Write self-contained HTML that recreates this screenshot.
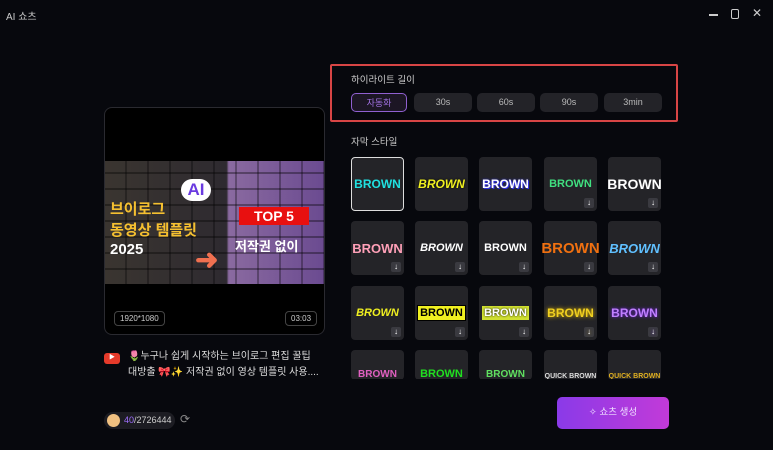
<!DOCTYPE html>
<html><head><meta charset="utf-8"><style>
*{margin:0;padding:0;box-sizing:border-box}
body{width:773px;height:450px;background:#07080d;font-family:"Liberation Sans","Noto Sans CJK KR",sans-serif;color:#ddd;position:relative;overflow:hidden}
.abs{position:absolute}
.btn{position:absolute;top:93px;height:19px;width:58px;background:#232328;border-radius:5px;font-size:9px;color:#bbb;text-align:center;line-height:19px}
.tile{position:absolute;width:53px;height:54px;background:#242428;border-radius:4px;display:flex;align-items:center;justify-content:center;font-weight:bold;font-size:12px;font-family:"Liberation Sans Narrow","Liberation Sans",sans-serif}
.dl{position:absolute;right:3px;bottom:3px;width:10px;height:10px;background:#3a3a40;border-radius:2px;color:#fff;font-size:8px;line-height:10px;text-align:center;font-family:"Liberation Sans",sans-serif}
</style></head><body>
<div class="abs" style="left:6px;top:8px;font-size:10px;color:#ccc">AI 쇼츠</div>
<div class="abs" style="left:709px;top:14px;width:9px;height:1.5px;background:#ccc"></div>
<div class="abs" style="left:731px;top:9px;width:8px;height:10px;border:1.5px solid #ccc;border-radius:2px"></div>
<div class="abs" style="left:752px;top:6px;font-size:12px;color:#ccc">✕</div>

<div class="abs" style="left:104px;top:107px;width:221px;height:228px;border:1px solid #2a2a30;border-radius:8px;background:#000;overflow:hidden">
 <div class="abs" style="left:0;top:53px;width:221px;height:123px;background:linear-gradient(90deg,#3a3530 0%,#2e2a30 55%,#8a6aa0 56%,#6a4a90 100%)">
  <div class="abs" style="left:0;top:0;width:221px;height:123px;background:repeating-linear-gradient(0deg,transparent 0 14px,rgba(0,0,0,.35) 14px 16px),repeating-linear-gradient(90deg,transparent 0 20px,rgba(0,0,0,.3) 20px 22px)"></div>
  <div class="abs" style="left:76px;top:18px;width:30px;height:22px;background:#fff;border-radius:11px;color:#6a3ae0;font-weight:bold;font-size:17px;text-align:center;line-height:22px">AI</div>
  <div class="abs" style="left:5px;top:38px;color:#f5c030;font-weight:bold;font-size:15px;line-height:21px">브이로그<br>동영상 템플릿</div>
  <div class="abs" style="left:5px;top:80px;color:#fff;font-weight:bold;font-size:15px">2025</div>
  <div class="abs" style="left:134px;top:46px;width:70px;height:18px;background:#e81010;color:#fff;font-weight:bold;font-size:14px;text-align:center;line-height:18px">TOP 5</div>
  <div class="abs" style="left:130px;top:75px;color:#fff;font-weight:bold;font-size:13px">저작권 없이</div>
  <div class="abs" style="left:90px;top:82px;color:#f07050;font-size:28px;font-weight:bold">➜</div>
 </div>
 <div class="abs" style="left:9px;top:203px;border:1px solid #444;border-radius:4px;font-size:8px;color:#ccc;padding:2px 5px">1920*1080</div>
 <div class="abs" style="left:180px;top:203px;border:1px solid #444;border-radius:4px;font-size:8px;color:#ccc;padding:2px 5px">03:03</div>
</div>

<div class="abs" style="left:104px;top:353px;width:16px;height:11px;background:#e53a2a;border-radius:3px;color:#fff;font-size:6px;text-align:center;line-height:11px">▶</div>
<div class="abs" style="left:128px;top:349px;font-size:10px;line-height:16px;color:#ddd">🌷누구나 쉽게 시작하는 브이로그 편집 꿀팁<br>대방출 🎀✨ 저작권 없이 영상 템플릿 사용....</div>

<div class="abs" style="left:104px;top:412px;width:71px;height:17px;background:#1c1c22;border-radius:9px"></div>
<div class="abs" style="left:107px;top:414px;width:13px;height:13px;border-radius:50%;background:#f0c080"></div>
<div class="abs" style="left:124px;top:415px;font-size:9px;color:#ccc"><span style="color:#a070ff">40</span>/2726444</div>
<div class="abs" style="left:180px;top:412px;font-size:12px;color:#888">⟳</div>

<div class="abs" style="left:330px;top:64px;width:348px;height:58px;border:2px solid #d84545;border-radius:2px"></div>
<div class="abs" style="left:351px;top:72px;font-size:9.5px;color:#ccc">하이라이트 길이</div>
<div class="btn" style="left:351px;width:56px;border:1px solid #9060d0;background:#1c1624;color:#a070e0">자동화</div>
<div class="btn" style="left:414px">30s</div>
<div class="btn" style="left:477px">60s</div>
<div class="btn" style="left:540px">90s</div>
<div class="btn" style="left:604px">3min</div>
<div class="abs" style="left:351px;top:134px;font-size:9.5px;color:#ccc">자막 스타일</div>

<div class="tile" style="left:351px;top:157px;border:1.5px solid #ddd;color:#20e0e0">BROWN</div>
<div class="tile" style="left:415px;top:157px;color:#f0f020;font-style:italic;text-shadow:0 0 2px #000">BROWN</div>
<div class="tile" style="left:479px;top:157px;color:#fff;text-shadow:0 0 2px #3030e0,1px 1px 0 #3030e0">BROWN</div>
<div class="tile" style="left:544px;top:157px;color:#40e080;font-size:11px">BROWN<span class="dl">↓</span></div>
<div class="tile" style="left:608px;top:157px;color:#fff;font-size:14px">BROWN<span class="dl">↓</span></div>

<div class="tile" style="left:351px;top:221px;color:#ffa0b8;font-size:13px">BROWN<span class="dl">↓</span></div>
<div class="tile" style="left:415px;top:221px;color:#fff;font-style:italic;font-size:11px">BROWN<span class="dl">↓</span></div>
<div class="tile" style="left:479px;top:221px;color:#fff;font-size:11px">BROWN<span class="dl">↓</span></div>
<div class="tile" style="left:544px;top:221px;color:#f07010;font-size:15px">BROWN<span class="dl">↓</span></div>
<div class="tile" style="left:608px;top:221px;color:#60c0ff;font-style:italic;font-size:13px">BROWN<span class="dl">↓</span></div>

<div class="tile" style="left:351px;top:286px;color:#f0f020;font-style:italic;font-size:11px">BROWN<span class="dl">↓</span></div>
<div class="tile" style="left:415px;top:286px"><span style="background:#f0f020;color:#000;font-size:11px;padding:1px 2px;border:1px solid #000">BROWN</span><span class="dl">↓</span></div>
<div class="tile" style="left:479px;top:286px"><span style="background:#d0e030;color:#fff;font-size:11px;padding:1px 2px;text-shadow:0 0 2px #000">BROWN</span><span class="dl">↓</span></div>
<div class="tile" style="left:544px;top:286px;color:#f0d020;text-shadow:0 0 4px #f0c000">BROWN<span class="dl">↓</span></div>
<div class="tile" style="left:608px;top:286px;color:#c080ff;text-shadow:0 0 3px #7020e0;font-size:12px">BROWN<span class="dl">↓</span></div>

<div class="tile" style="left:351px;top:350px;height:30px;align-items:flex-end;color:#e060c0;font-size:10px">BROWN</div>
<div class="tile" style="left:415px;top:350px;height:30px;align-items:flex-end;color:#20e020;font-size:11px">BROWN</div>
<div class="tile" style="left:479px;top:350px;height:30px;align-items:flex-end;color:#60e060;font-size:10px">BROWN</div>
<div class="tile" style="left:544px;top:350px;height:30px;align-items:flex-end;color:#ddd;font-size:7px">QUICK BROWN</div>
<div class="tile" style="left:608px;top:350px;height:30px;align-items:flex-end;color:#e0b020;font-size:7px">QUICK BROWN</div>
<div class="abs" style="left:340px;top:379px;width:340px;height:71px;background:#07080d"></div>

<div class="abs" style="left:557px;top:397px;width:112px;height:32px;border-radius:5px;background:linear-gradient(90deg,#8a3ae8,#c23ad8);color:#f0e0ff;font-size:9.5px;text-align:center;line-height:32px">✧ 쇼츠 생성</div>
</body></html>
